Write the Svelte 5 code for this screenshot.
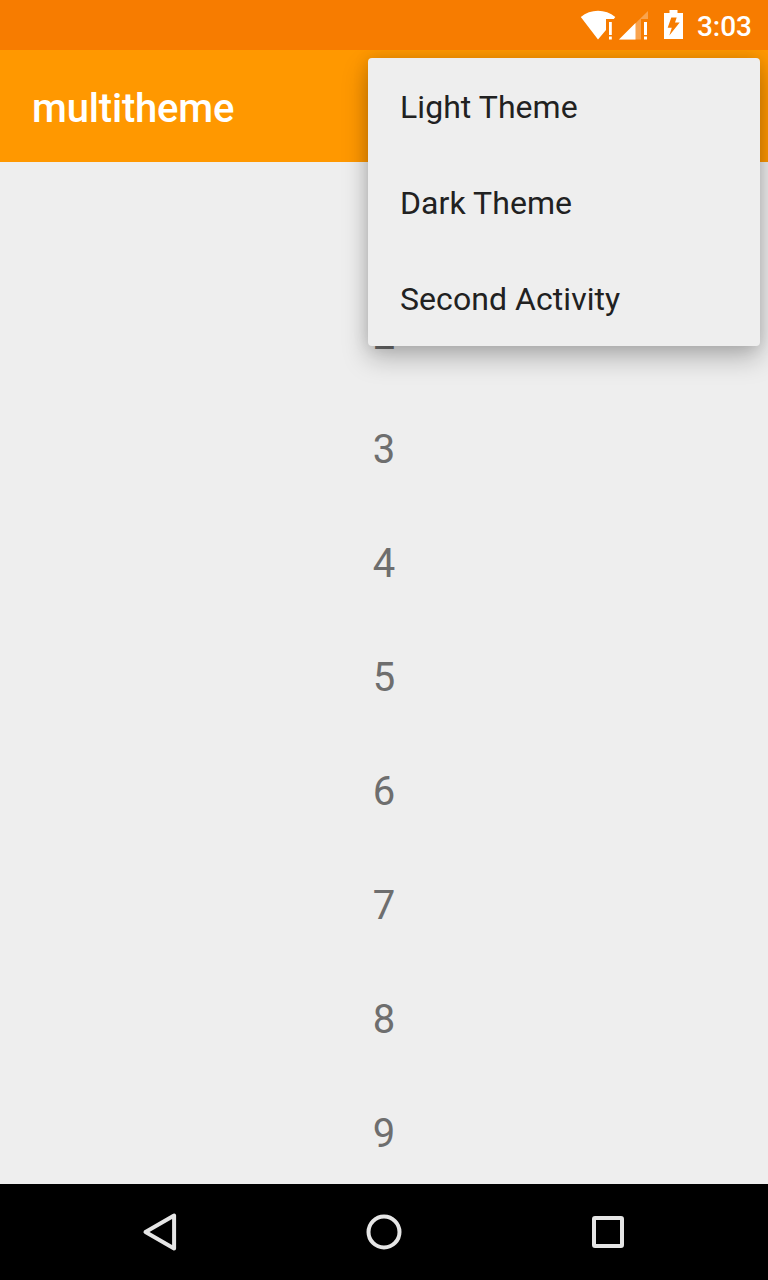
<script>
  const numbers = [1, 2, 3, 4, 5, 6, 7, 8, 9];
  const options = ['Light Theme', 'Dark Theme', 'Second Activity'];
</script>

<div class="screen">
  <header class="status">
    <svg width="72" height="50" viewBox="0 0 72 50" aria-hidden="true">
      <path fill="#fff" d="M.8 17C10.500 8.800 25.500 8.800 35.300 17L33.800 19H26V30L18 39.500Z" />
      <path fill="#fff" d="M29 22h2.800v13h-2.800zM29 36.500h2.800v3h-2.800z" />
      <path fill="#fff" opacity=".3" d="M68 11V19H61V39.500H39Z" />
      <path fill="#fff" d="M55.500 23V39.500H39Z" />
      <path fill="#fff" d="M64 22h3v13h-3zM64 36.500h3v3h-3z" />
    </svg>
    <svg class="battery" width="20" height="50" viewBox="0 0 20 50" aria-hidden="true">
      <path fill="#fff" fill-rule="evenodd" d="M5.500 10h8v3H19V39H0V13H5.500ZM7.300 17.500H12.700L11 22.500H15.700L5.300 35.500L7.800 27.800H3.700Z" />
    </svg>
    <time>3:03</time>
  </header>
  <div class="appbar"><h1>multitheme</h1></div>
  <main>
    {#each numbers as n}
      <div class="row">{n}</div>
    {/each}
  </main>
  <nav>
    <button aria-label="Back">
      <svg width="48" height="48" viewBox="0 0 48 48"><path d="M38.100 7.500V40.500L9.500 24Z" /></svg>
    </button>
    <button aria-label="Home">
      <svg width="48" height="48" viewBox="0 0 48 48"><circle cx="24" cy="24" r="15.500" /></svg>
    </button>
    <button aria-label="Overview">
      <svg width="48" height="48" viewBox="0 0 48 48"><rect x="10" y="10" width="28" height="28" rx="1" /></svg>
    </button>
  </nav>
  <div class="menu">
    {#each options as option}
      <div class="item">{option}</div>
    {/each}
  </div>
</div>

<style>
  :global(body) { margin: 0; }
  .screen {
    position: relative;
    display: flex;
    flex-direction: column;
    width: 768px;
    height: 1280px;
    overflow: hidden;
    background: #eee;
    font-family: Roboto, sans-serif;
  }
  .status {
    position: relative;
    z-index: 2;
    display: flex;
    flex: 0 0 50px;
    height: 50px;
    min-height: 0;
    align-items: flex-start;
    justify-content: flex-end;
    box-sizing: border-box;
    padding-right: 16px;
    background: #f77c00;
    color: #fff;
  }
  .status svg { display: block; }
  .battery { margin: 0 13px 0 12px; }
  time {
    height: 50px;
    font-size: 28px;
    font-weight: 500;
    line-height: 54px;
  }
  .appbar {
    display: flex;
    flex: 0 0 112px;
    align-items: center;
    padding-left: 32px;
    background: #ff9800;
  }
  h1 {
    margin: 5px 0 0;
    color: #fff;
    font-size: 40px;
    font-weight: 500;
    line-height: 48px;
    letter-spacing: -0.18px;
  }
  main {
    flex: 1 1 0;
    min-height: 0;
    overflow: hidden;
    padding-top: 3px;
  }
  .row {
    height: 114px;
    line-height: 114px;
    text-align: center;
    font-size: 40px;
    color: #6e6e6e;
  }
  nav {
    display: flex;
    flex: 0 0 96px;
    align-items: center;
    justify-content: center;
    gap: 176px;
    background: #000;
  }
  button {
    display: block;
    padding: 0;
    border: 0;
    background: none;
  }
  button svg {
    display: block;
    fill: none;
    stroke: #e6e6e6;
    stroke-width: 4;
    stroke-linejoin: round;
  }
  .menu {
    position: absolute;
    z-index: 1;
    top: 58px;
    right: 8px;
    width: 392px;
    border-radius: 4px;
    background: #eee;
    box-shadow: 0 12px 26px rgba(0, 0, 0, 0.25), 0 0 16px rgba(0, 0, 0, 0.12);
  }
  .item {
    height: 96px;
    padding-left: 32px;
    line-height: 98px;
    font-size: 32px;
    letter-spacing: 0.06px;
    color: #212121;
  }
</style>
